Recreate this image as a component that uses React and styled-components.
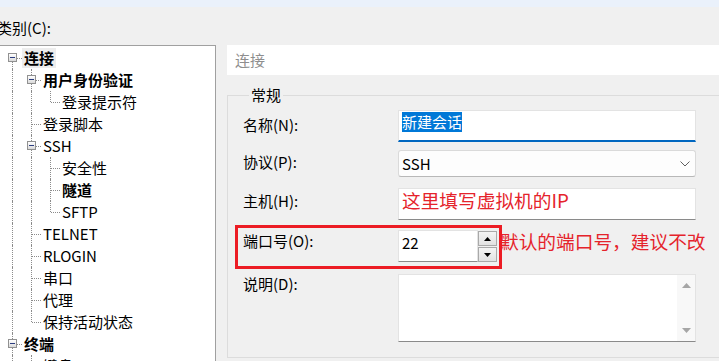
import React from 'react';
import styled, { createGlobalStyle } from 'styled-components';

const Global = createGlobalStyle`
  html, body { margin: 0; padding: 0; background: #f0f0f0; overflow: hidden; }
  body { font-family: "Noto Sans CJK SC", "Noto Sans", sans-serif; font-size: 15px; color: #000; }
  * { box-sizing: border-box; }
`;

const Window = styled.div`
  width: 719px;
  height: 361px;
  overflow: hidden;
  display: flex;
  flex-direction: column;
  background: #f0f0f0;
`;

const TitleStrip = styled.div`
  height: 7px;
  flex-shrink: 0;
  background: #eaf1fb;
`;

const CategoryLabel = styled.div`
  height: 38px;
  flex-shrink: 0;
  padding-top: 11px;
  margin-left: -3px;
  line-height: 20px;
  font-size: 15px;
`;

const Main = styled.div`
  flex: 1;
  min-height: 0;
  display: flex;
`;

/* ---------- tree ---------- */

const TreePanel = styled.div`
  width: 216px;
  flex-shrink: 0;
  background: #fff;
  border-top: 1px solid #a0a0a0;
  border-right: 1px solid #a0a0a0;
  padding-top: 1px;
  overflow: hidden;
`;

const TreeRow = styled.div`
  display: flex;
  align-items: center;
  height: 22px;
  padding-left: 3px;
  white-space: nowrap;
`;

const Cell = styled.span`
  position: relative;
  width: 19px;
  height: 22px;
  flex-shrink: 0;
  &::before {
    content: '';
    display: ${(p) => (p.$up || p.$down ? 'block' : 'none')};
    position: absolute;
    left: 9px;
    top: ${(p) => (p.$up ? '0' : '11px')};
    bottom: ${(p) => (p.$down ? '0' : '11px')};
    border-left: 1px dotted #8c8c8c;
  }
  &::after {
    content: '';
    display: ${(p) => (p.$h ? 'block' : 'none')};
    position: absolute;
    left: 10px;
    right: 0;
    top: 11px;
    border-top: 1px dotted #8c8c8c;
  }
`;

const Expander = styled.span`
  position: absolute;
  left: 5px;
  top: 6px;
  width: 9px;
  height: 9px;
  z-index: 1;
  border: 1px solid #919191;
  background: linear-gradient(#ffffff, #dadada);
  &::after {
    content: '';
    position: absolute;
    left: 1px;
    right: 1px;
    top: 3px;
    height: 1px;
    background: #2c3d80;
  }
`;

const NodeText = styled.span`
  padding: 0 2px;
  line-height: 20px;
  font-weight: ${(p) => (p.$bold ? 700 : 400)};
  background: ${(p) => (p.$selected ? '#ededed' : 'transparent')};
`;

const treeRows = [
  { text: '连接', level: 0, own: 'box', up: false, down: true, bold: true, selected: true },
  { text: '用户身份验证', level: 1, guides: [true], own: 'box', up: true, down: true, bold: true },
  { text: '登录提示符', level: 2, guides: [true, true], own: 'elbow' },
  { text: '登录脚本', level: 1, guides: [true], own: 'tee' },
  { text: 'SSH', level: 1, guides: [true], own: 'box', up: true, down: true },
  { text: '安全性', level: 2, guides: [true, true], own: 'tee' },
  { text: '隧道', level: 2, guides: [true, true], own: 'tee', bold: true },
  { text: 'SFTP', level: 2, guides: [true, true], own: 'elbow' },
  { text: 'TELNET', level: 1, guides: [true], own: 'tee' },
  { text: 'RLOGIN', level: 1, guides: [true], own: 'tee' },
  { text: '串口', level: 1, guides: [true], own: 'tee' },
  { text: '代理', level: 1, guides: [true], own: 'tee' },
  { text: '保持活动状态', level: 1, guides: [true], own: 'elbow' },
  { text: '终端', level: 0, own: 'box', up: true, down: true, bold: true },
  { text: '键盘', level: 1, guides: [true], own: 'tee' },
];

function TreeNode({ node }) {
  const guides = node.guides || [];
  let own;
  if (node.own === 'box') {
    own = (
      <Cell $up={node.up} $down={node.down} $h>
        <Expander />
      </Cell>
    );
  } else if (node.own === 'tee') {
    own = <Cell $up $down $h />;
  } else {
    own = <Cell $up $h />;
  }
  return (
    <TreeRow>
      {guides.map((g, i) => (
        <Cell key={i} $up={g} $down={g} />
      ))}
      {own}
      <NodeText $bold={node.bold} $selected={node.selected}>
        {node.text}
      </NodeText>
    </TreeRow>
  );
}

/* ---------- right side ---------- */

const RightPanel = styled.div`
  flex: 1;
  margin-left: 11px;
  margin-right: -10px;
  display: flex;
  flex-direction: column;
`;

const PageHeader = styled.div`
  height: 30px;
  flex-shrink: 0;
  background: #fff;
  padding-left: 8px;
  line-height: 30px;
  color: #8e8e8e;
`;

const GroupBox = styled.fieldset`
  margin: 10px 0 0 0;
  padding: 5px 0 15px 15px;
  border: 1px solid #dcdcdc;
  min-width: 0;
`;

const GroupTitle = styled.legend`
  margin-left: 6px;
  padding: 0 2px;
  line-height: 20px;
  font-size: 15px;
`;

const FieldRow = styled.div`
  position: relative;
  display: flex;
  align-items: flex-start;
  margin-top: ${(p) => p.$mt || 0}px;
`;

const FieldLabel = styled.div`
  width: 155px;
  flex-shrink: 0;
  line-height: 20px;
  padding-top: ${(p) => p.$pt || 0}px;
`;

const TextBox = styled.div`
  width: ${(p) => p.$w || 298}px;
  height: ${(p) => p.$h || 32}px;
  flex-shrink: 0;
  background: #fff;
  border: 1px solid #e3e3e3;
  border-bottom: ${(p) => (p.$focused ? '2px solid #0067c0' : '1px solid #8a8a8a')};
  padding: ${(p) => (p.$pt != null ? p.$pt : 1)}px 0 0 3px;
  display: flex;
  align-items: flex-start;
  line-height: 20px;
  position: relative;
`;

const Selected = styled.span`
  background: #0078d7;
  color: #fff;
`;

const Hint = styled.span`
  color: #e5232b;
  font-size: 18.7px;
  line-height: 22px;
  white-space: nowrap;
`;

const HintAfter = styled(Hint)`
  margin-left: 3px;
`;

const Dropdown = styled.div`
  width: 298px;
  height: 27px;
  flex-shrink: 0;
  background: #fdfdfd;
  border: 1px solid #dadada;
  border-bottom-color: #b8b8b8;
  border-radius: 3px;
  padding: 0 5px 0 3px;
  display: flex;
  align-items: center;
  justify-content: space-between;
  line-height: 20px;
`;

const Spinner = styled.div`
  width: 19px;
  flex-shrink: 0;
  margin-top: 1px;
  display: flex;
  flex-direction: column;
  gap: 1px;
`;

const SpinButton = styled.div`
  height: 15px;
  border: 1px solid #a9a9a9;
  background: linear-gradient(#f4f4f4, #e2e2e2);
  display: flex;
  align-items: center;
  justify-content: center;
`;

const Annotation = styled.div`
  position: absolute;
  left: -8px;
  top: -5px;
  width: 267px;
  height: 44px;
  border: 3px solid #ec1c24;
  pointer-events: none;
`;

const ScrollTrack = styled.div`
  position: absolute;
  right: 0;
  top: 0;
  bottom: 0;
  width: 18px;
  background: #f8f8f8;
  display: flex;
  flex-direction: column;
  align-items: center;
  justify-content: space-between;
  padding: 8px 0 8px;
`;

const Tri = ({ down, color = '#000', w = 7, h = 4 }) => (
  <svg width={w} height={h} viewBox={`0 0 ${w} ${h}`}>
    <polygon
      points={down ? `0,0 ${w},0 ${w / 2},${h}` : `0,${h} ${w},${h} ${w / 2},0`}
      fill={color}
    />
  </svg>
);

const Chevron = () => (
  <svg width="10" height="6" viewBox="0 0 10 6">
    <polyline points="0.5,0.5 5,5 9.5,0.5" fill="none" stroke="#5f5f5f" strokeWidth="1" />
  </svg>
);

export default function App() {
  return (
    <>
      <Global />
      <Window>
        <TitleStrip />
        <CategoryLabel>类别(C):</CategoryLabel>
        <Main>
          <TreePanel>
            {treeRows.map((n, i) => (
              <TreeNode key={i} node={n} />
            ))}
          </TreePanel>
          <RightPanel>
            <PageHeader>连接</PageHeader>
            <GroupBox>
              <GroupTitle>常规</GroupTitle>
              <FieldRow>
                <FieldLabel $pt={5}>名称(N):</FieldLabel>
                <TextBox $focused>
                  <Selected>新建会话</Selected>
                </TextBox>
              </FieldRow>
              <FieldRow $mt={8}>
                <FieldLabel $pt={2}>协议(P):</FieldLabel>
                <Dropdown>
                  <span>SSH</span>
                  <Chevron />
                </Dropdown>
              </FieldRow>
              <FieldRow $mt={11}>
                <FieldLabel $pt={3}>主机(H):</FieldLabel>
                <TextBox $pt={0}>
                  <Hint>这里填写虚拟机的IP</Hint>
                </TextBox>
              </FieldRow>
              <FieldRow $mt={10}>
                <FieldLabel $pt={1}>端口号(O):</FieldLabel>
                <TextBox $w={80} $pt={2}>22</TextBox>
                <Spinner>
                  <SpinButton>
                    <Tri />
                  </SpinButton>
                  <SpinButton>
                    <Tri down />
                  </SpinButton>
                </Spinner>
                <HintAfter>默认的端口号，建议不改</HintAfter>
                <Annotation />
              </FieldRow>
              <FieldRow $mt={12}>
                <FieldLabel $pt={0}>说明(D):</FieldLabel>
                <TextBox $h={68}>
                  <ScrollTrack>
                    <Tri color="#a6a6a6" w={9} h={5} />
                    <Tri down color="#a6a6a6" w={9} h={5} />
                  </ScrollTrack>
                </TextBox>
              </FieldRow>
            </GroupBox>
          </RightPanel>
        </Main>
      </Window>
    </>
  );
}
